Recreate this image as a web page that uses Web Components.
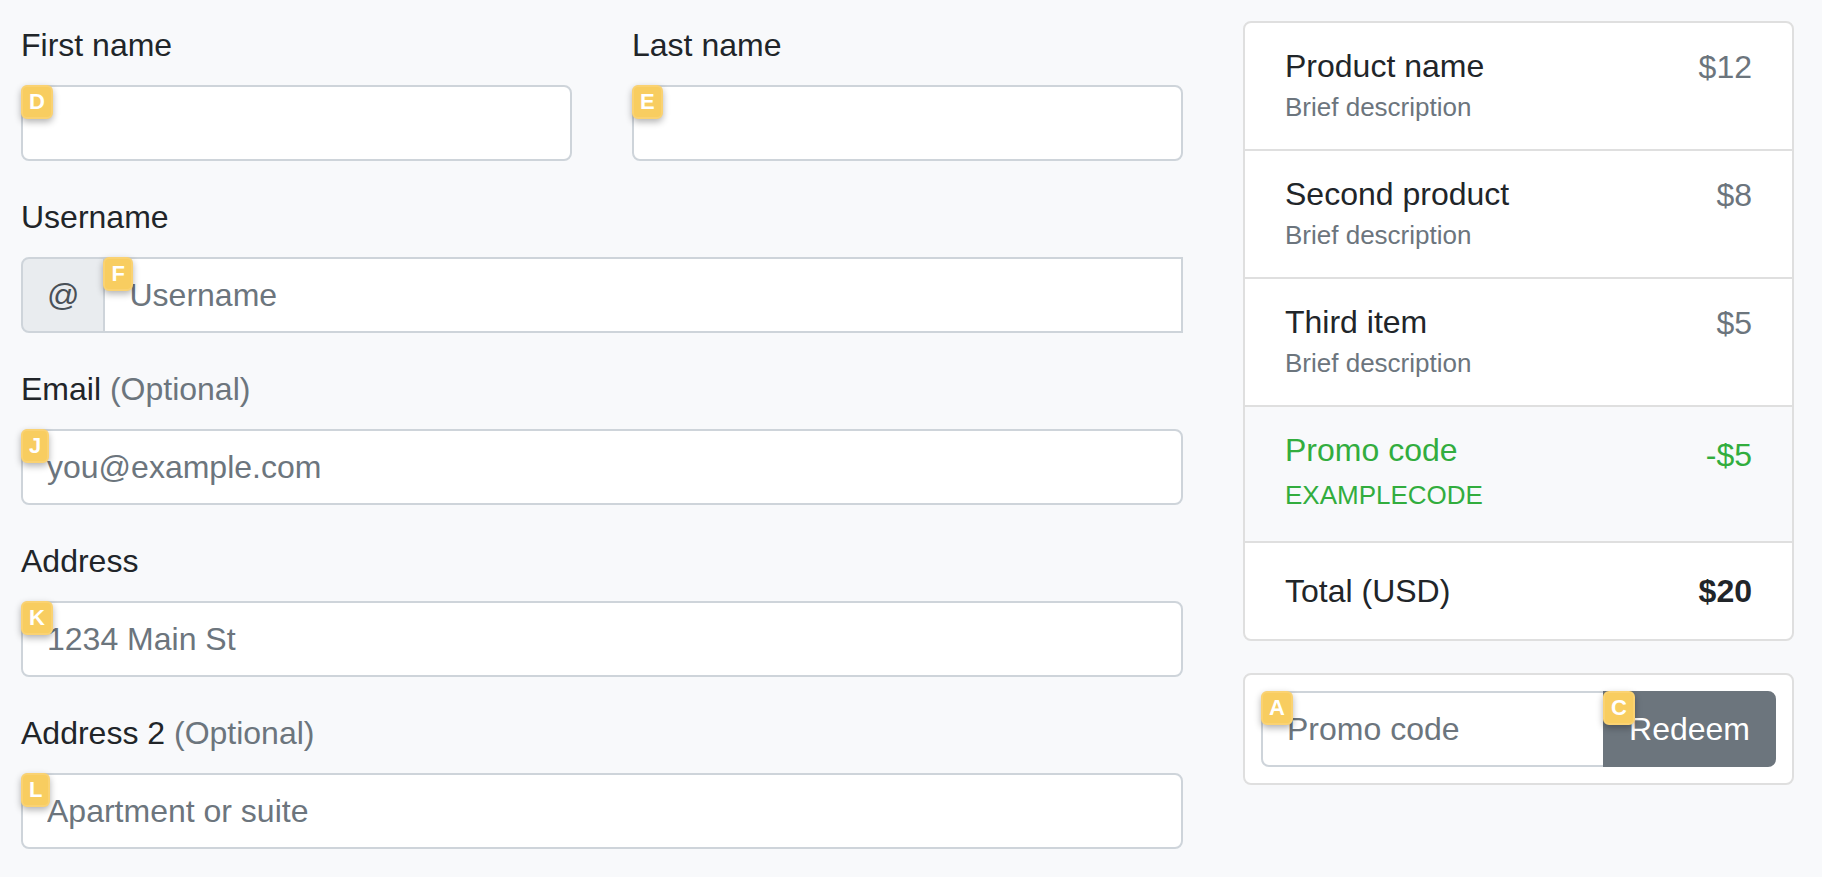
<!DOCTYPE html>
<html lang="en">
<head>
<meta charset="utf-8">
<meta name="viewport" content="width=device-width, initial-scale=1">
<title>Checkout</title>
<style>
  body {
    margin: 0;
    background: #f8f9fb;
    color: #212529;
    font: 32px/48px "Liberation Sans", Arial, sans-serif;
  }
</style>
</head>
<body>
<checkout-layout>
  <form-field name="firstName" label="First name" hint="D"></form-field>
  <form-field name="lastName" label="Last name" hint="E"></form-field>
  <form-field class="wide" name="username" label="Username" placeholder="Username" prefix="@" hint="F"></form-field>
  <form-field class="wide" name="email" type="email" label="Email" optional placeholder="you@example.com" hint="J"></form-field>
  <form-field class="wide" name="address" label="Address" placeholder="1234 Main St" hint="K"></form-field>
  <form-field class="wide" name="address2" label="Address 2" optional placeholder="Apartment or suite" hint="L"></form-field>

  <cart-list slot="aside">
    <cart-item price="$12">Product name<span slot="note">Brief description</span></cart-item>
    <cart-item price="$8">Second product<span slot="note">Brief description</span></cart-item>
    <cart-item price="$5">Third item<span slot="note">Brief description</span></cart-item>
    <cart-item class="promo" price="-$5">Promo code<span slot="note">EXAMPLECODE</span></cart-item>
    <cart-item class="total" price="$20">Total (USD)</cart-item>
  </cart-list>
  <promo-form slot="aside"></promo-form>
</checkout-layout>

<template id="checkout-layout">
  <style>
    :host { display: block; padding: 21px 28px 28px 21px; }
    .page { display: grid; grid-template-columns: repeat(3, minmax(0, 1fr)); column-gap: 60px; align-items: start; }
    form { grid-column: span 2; display: grid; grid-template-columns: repeat(2, minmax(0, 1fr)); gap: 32px 60px; }
    aside { display: flex; flex-direction: column; gap: 32px; }
    ::slotted(.wide) { grid-column: span 2; }
    @media (max-width: 900px) {
      .page { grid-template-columns: minmax(0, 1fr); row-gap: 32px; }
      form { grid-column: auto; }
    }
  </style>
  <div class="page">
    <form><slot></slot></form>
    <aside><slot name="aside"></slot></aside>
  </div>
</template>

<template id="key-hint">
  <style>
    :host {
      position: absolute; top: 0; left: 0; z-index: 2;
      box-sizing: border-box;
      padding: 2px 6px;
      border: 2px solid #fad272;
      border-radius: 6px;
      background: #f8cd60;
      box-shadow: 0 3px 7px rgba(0, 0, 0, .3);
      color: #fff;
      font-size: 22px; line-height: 26px; font-weight: 700;
      pointer-events: none;
    }
  </style>
  <slot></slot>
</template>

<template id="form-field">
  <style>
    :host { display: block; }
    label { display: block; margin-bottom: 16px; }
    .muted { color: #6c757d; }
    .group { display: flex; }
    .prefix {
      padding: 12px 24px;
      border: 2px solid #ced4da; border-radius: 8px 0 0 8px;
      background: #e9ecef; color: #495057;
    }
    .control { position: relative; flex: 1; min-width: 0; }
    .prefix + .control { margin-left: -2px; }
    .prefix + .control input { border-radius: 0; }
    input {
      display: block; box-sizing: border-box; width: 100%; height: 76px; margin: 0;
      padding: 12px 24px;
      border: 2px solid #ced4da; border-radius: 8px;
      background: #fff; color: #495057; font: inherit;
    }
    input::placeholder { color: #6c757d; opacity: 1; }
  </style>
  <label for="input"></label>
  <div class="group"><div class="control"><input id="input"><key-hint></key-hint></div></div>
</template>

<template id="cart-list">
  <style>
    :host {
      display: block; overflow: hidden;
      border: 2px solid #dfdfdf; border-radius: 8px;
      background: #fff;
    }
  </style>
  <div role="list"><slot></slot></div>
</template>

<template id="cart-item">
  <style>
    :host {
      display: flex; justify-content: space-between;
      padding: 24px 40px;
      line-height: 40px;
    }
    :host(:not(:last-child)) { border-bottom: 2px solid #dfdfdf; }
    :host(.promo) { background: #f8f9fb; color: #32ad3e; line-height: 48px; }
    :host(.total) { line-height: 48px; }
    .name { display: block; line-height: 38px; }
    :host(.total) .name { line-height: inherit; }
    ::slotted([slot="note"]) { color: #6c757d; font-size: 26px; line-height: 32px; }
    .price { color: #6c757d; }
    :host(.promo) ::slotted([slot="note"]), :host(.promo) .price { color: inherit; }
    :host(.total) .price { color: inherit; font-weight: 700; }
  </style>
  <div><span class="name"><slot></slot></span><slot name="note"></slot></div>
  <span class="price"></span>
</template>

<template id="promo-form">
  <style>
    :host {
      display: block; padding: 16px;
      border: 2px solid #dfdfdf; border-radius: 8px;
      background: #fff;
    }
    form { display: flex; }
    .control { position: relative; flex: 1; min-width: 0; }
    .action { position: relative; margin-left: -2px; }
    input, button { display: block; box-sizing: border-box; height: 76px; margin: 0; padding: 12px 24px; font: inherit; }
    input { width: 100%; border: 2px solid #ced4da; border-radius: 8px 0 0 8px; background: #fff; color: #495057; }
    input::placeholder { color: #6c757d; opacity: 1; }
    button { border: 2px solid #6c757d; border-radius: 0 8px 8px 0; background: #6c757d; color: #fff; cursor: pointer; }
  </style>
  <form>
    <div class="control"><input name="promo" placeholder="Promo code" aria-label="Promo code"><key-hint>A</key-hint></div>
    <div class="action"><button type="button">Redeem</button><key-hint>C</key-hint></div>
  </form>
</template>

<script>
  class TemplateElement extends HTMLElement {
    constructor() {
      super();
      this.attachShadow({ mode: "open" })
        .append(document.getElementById(this.localName).content.cloneNode(true));
    }
  }

  class FormField extends TemplateElement {
    connectedCallback() {
      const root = this.shadowRoot;
      const label = root.querySelector("label");
      const input = root.querySelector("input");
      label.textContent = this.getAttribute("label");
      if (this.hasAttribute("optional")) {
        const note = document.createElement("span");
        note.className = "muted";
        note.textContent = "(Optional)";
        label.append(" ", note);
      }
      input.type = this.getAttribute("type") || "text";
      input.name = this.getAttribute("name");
      input.placeholder = this.getAttribute("placeholder") || "";
      root.querySelector("key-hint").textContent = this.getAttribute("hint");
      if (this.hasAttribute("prefix") && !root.querySelector(".prefix")) {
        const prefix = document.createElement("span");
        prefix.className = "prefix";
        prefix.textContent = this.getAttribute("prefix");
        root.querySelector(".group").prepend(prefix);
      }
    }
  }

  class CartItem extends TemplateElement {
    connectedCallback() {
      this.setAttribute("role", "listitem");
      this.shadowRoot.querySelector(".price").textContent = this.getAttribute("price");
    }
  }

  customElements.define("key-hint", class extends TemplateElement {});
  customElements.define("form-field", FormField);
  customElements.define("cart-item", CartItem);
  customElements.define("cart-list", class extends TemplateElement {});
  customElements.define("promo-form", class extends TemplateElement {});
  customElements.define("checkout-layout", class extends TemplateElement {});
</script>
</body>
</html>
